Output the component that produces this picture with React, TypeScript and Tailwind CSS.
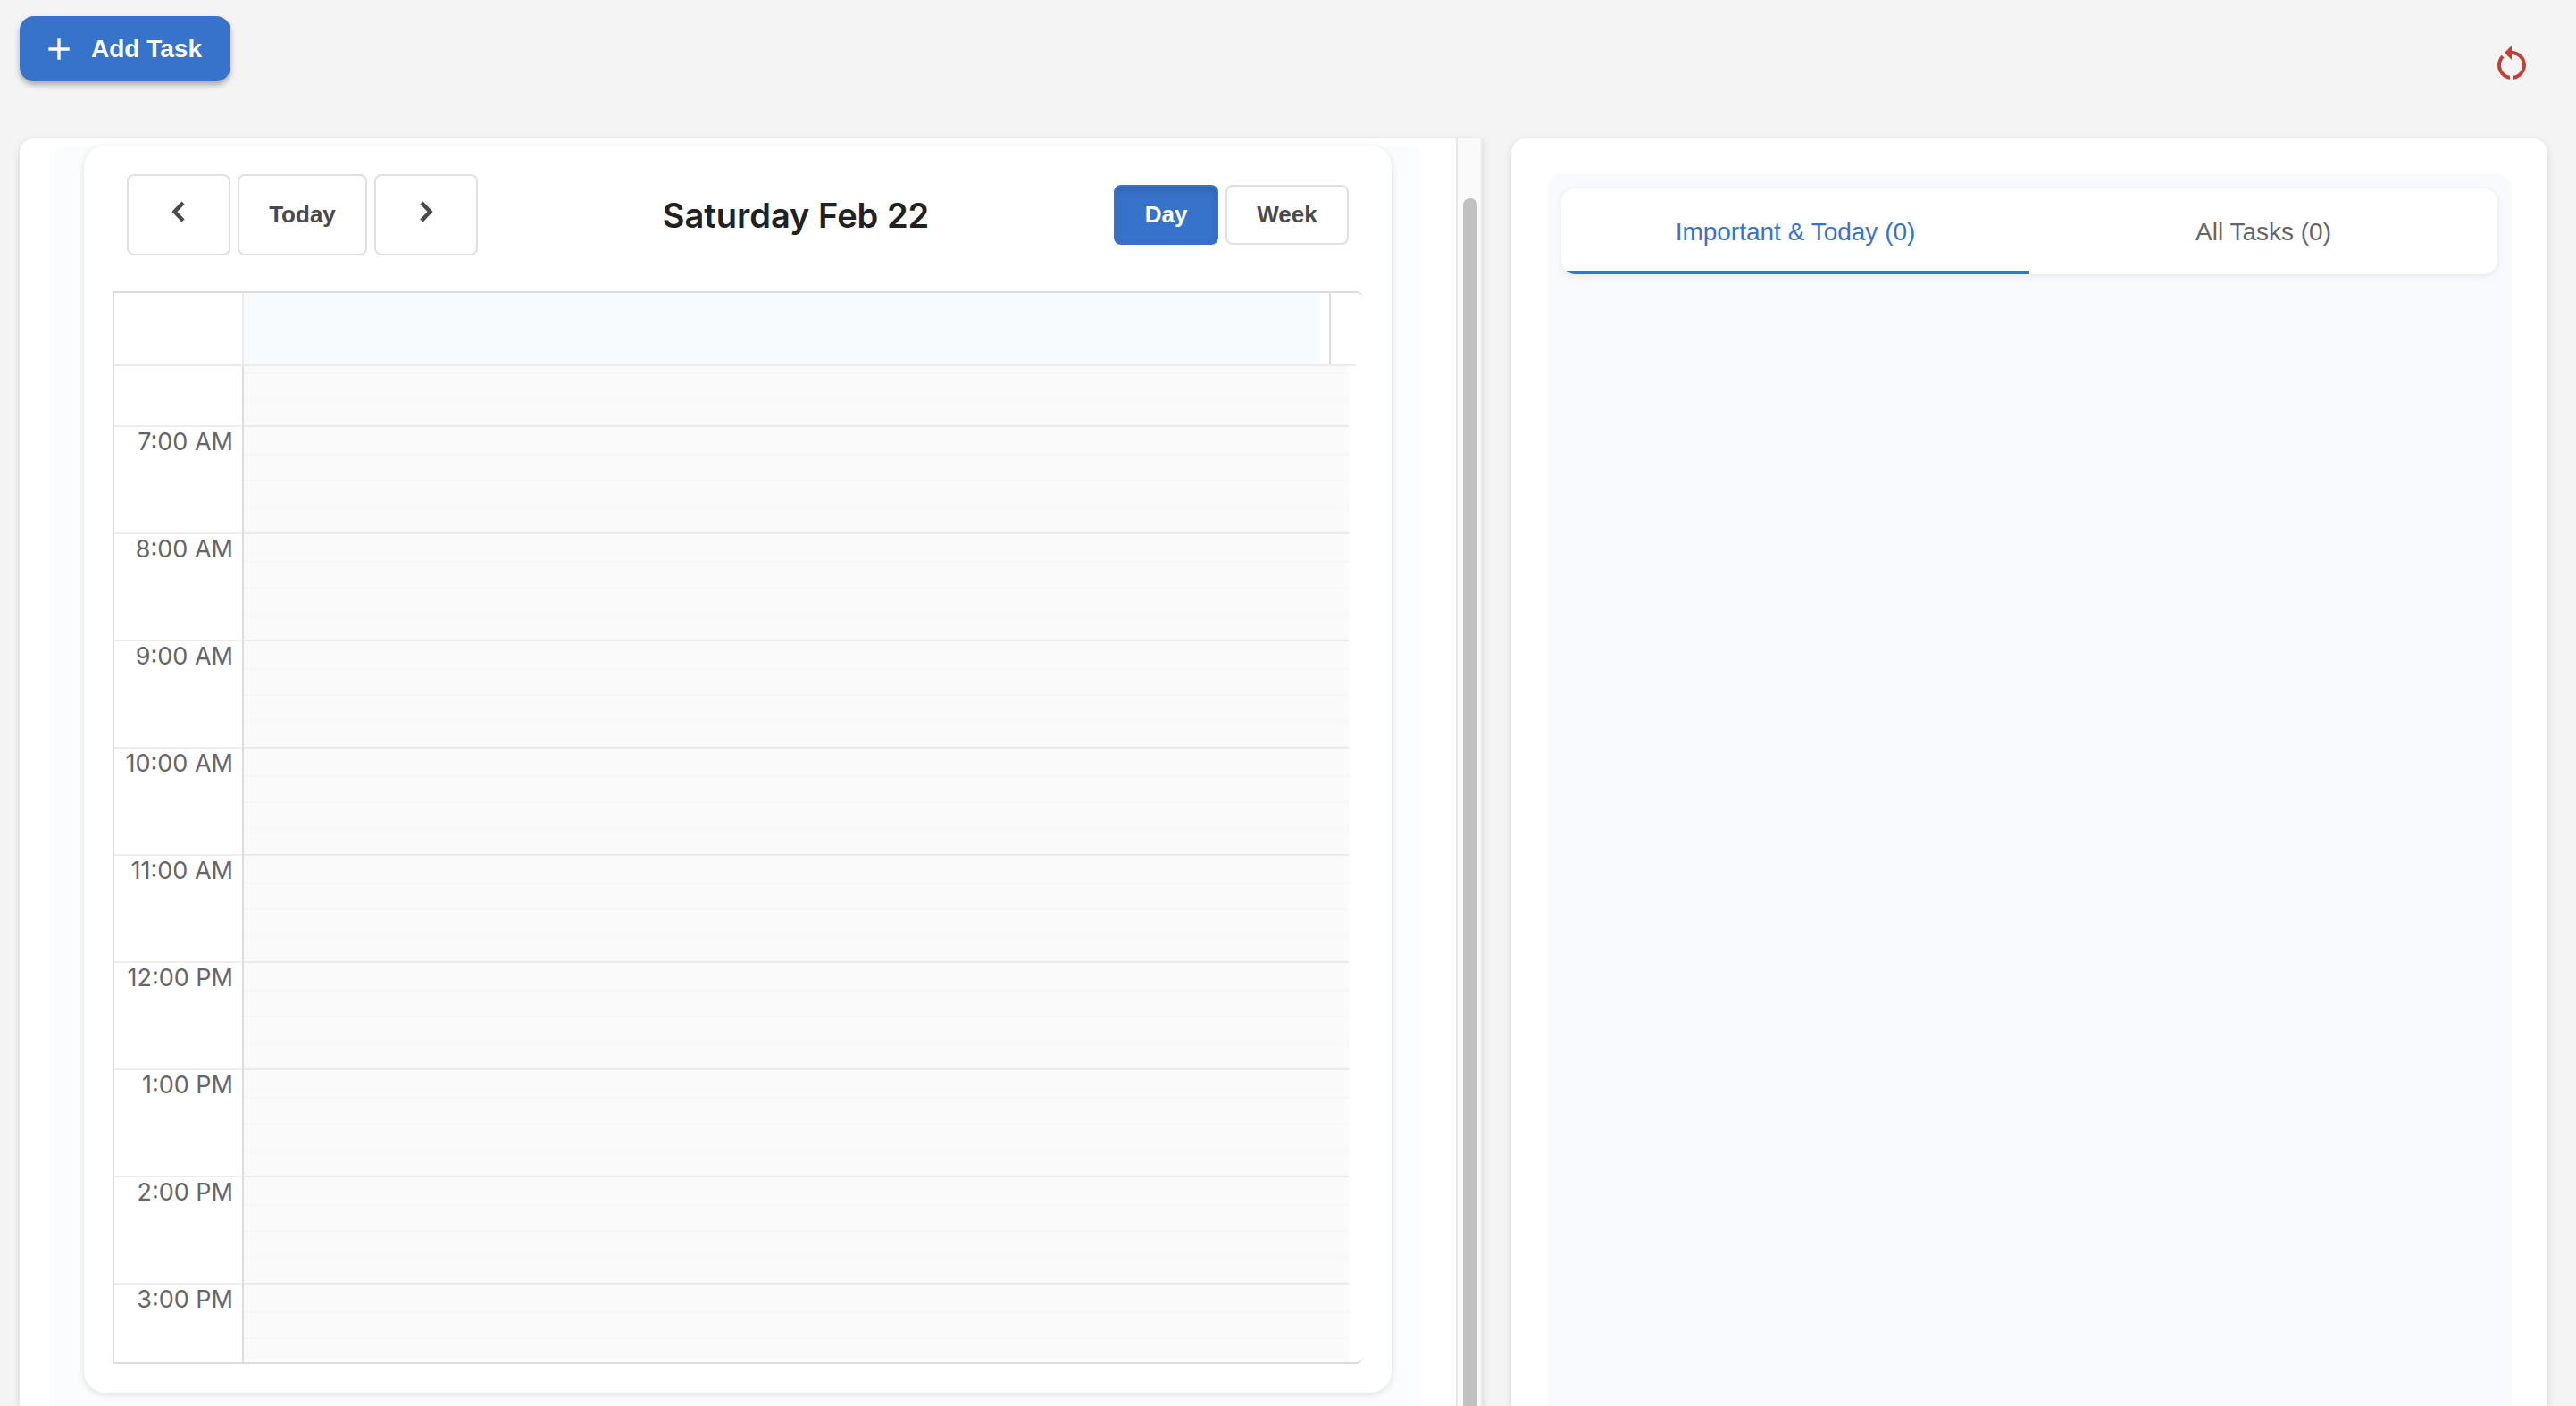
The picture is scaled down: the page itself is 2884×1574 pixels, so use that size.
import React, { useState } from "react";

type HourRow = { label: string; height: string; slots: string[] };

const FULL = ["h-[30px]", "h-[29px]", "h-[30px]", "h-[29px]"];

const rows: HourRow[] = [
  { label: "", height: "h-[66px]", slots: ["h-[7px]", "h-[30px]", "h-[29px]"] },
  { label: "7:00 AM", height: "h-[120px]", slots: FULL },
  { label: "8:00 AM", height: "h-[120px]", slots: FULL },
  { label: "9:00 AM", height: "h-[120px]", slots: FULL },
  { label: "10:00 AM", height: "h-[120px]", slots: FULL },
  { label: "11:00 AM", height: "h-[120px]", slots: FULL },
  { label: "12:00 PM", height: "h-[120px]", slots: FULL },
  { label: "1:00 PM", height: "h-[120px]", slots: FULL },
  { label: "2:00 PM", height: "h-[120px]", slots: FULL },
  { label: "3:00 PM", height: "h-[89px]", slots: ["h-[30px]", "h-[29px]", "h-[28px]"] },
];

const PANEL_SHADOW = "shadow-[0_2px_8px_rgba(0,0,0,0.12)]";

function Chevron({ flip = false }: { flip?: boolean }) {
  return (
    <svg
      viewBox="0 0 16 24"
      className={flip ? "h-6 w-4 -scale-x-100" : "h-6 w-4"}
      fill="none"
      stroke="currentColor"
      strokeWidth="4.5"
      strokeLinejoin="miter"
      aria-hidden="true"
    >
      <path d="M13 2 L3.5 12 L13 22" />
    </svg>
  );
}

function ToolbarButton({
  children,
  className = "",
  ...props
}: React.ButtonHTMLAttributes<HTMLButtonElement>) {
  return (
    <button
      type="button"
      className={`flex items-center justify-center rounded-lg border-2 text-[26px] font-bold ${className}`}
      {...props}
    >
      {children}
    </button>
  );
}

function Header() {
  return (
    <header className="mr-[10px] flex h-[93px] justify-between">
      <button
        type="button"
        className="flex h-[73px] items-center gap-4 self-start rounded-2xl bg-[#3873cb] pl-6 pr-8 text-[28px] font-bold text-white shadow-[0_4px_6px_rgba(0,0,0,0.3)]"
      >
        <svg viewBox="0 0 24 24" className="size-10" fill="currentColor" aria-hidden="true">
          <path d="M19 13h-6v6h-2v-6H5v-2h6V5h2v6h6z" />
        </svg>
        Add Task
      </button>
      <button type="button" aria-label="Reset" className="self-end p-4 text-[#c43e35]">
        <svg viewBox="0 0 24 24" className="size-12" fill="currentColor" aria-hidden="true">
          <path d="M12 5V2L8 6l4 4V7c3.31 0 6 2.69 6 6 0 2.97-2.17 5.43-5 5.91v2.02c3.95-.49 7-3.85 7-7.93 0-4.42-3.58-8-8-8m-6 8c0-1.65.67-3.15 1.76-4.24L6.34 7.34C4.9 8.79 4 10.79 4 13c0 4.08 3.05 7.44 7 7.93v-2.02c-2.83-.48-5-2.94-5-5.91" />
        </svg>
      </button>
    </header>
  );
}

function Calendar() {
  const [view, setView] = useState("Day");
  return (
    <section className="mt-2 rounded-3xl bg-white p-8 shadow-[0_2px_8px_rgba(0,0,0,0.12)]">
      <div className="mb-10 flex h-[91px] items-center justify-between px-4">
        <div className="flex gap-2 text-[#4a4a4a]">
          <ToolbarButton aria-label="Previous day" className="h-[91px] w-[116px] border-[#e0e0e0] pb-2">
            <Chevron />
          </ToolbarButton>
          <ToolbarButton className="w-[145px] border-[#e0e0e0]">Today</ToolbarButton>
          <ToolbarButton aria-label="Next day" className="h-[91px] w-[116px] border-[#e0e0e0] pb-2">
            <Chevron flip />
          </ToolbarButton>
        </div>
        <h2 className="font-['Inter'] text-[38px] leading-[48px] font-semibold text-[#212121]">
          Saturday Feb 22
        </h2>
        <div className="grid grid-cols-[117px_138px] gap-2">
          {["Day", "Week"].map((name) => (
            <ToolbarButton
              key={name}
              aria-pressed={view === name}
              onClick={() => setView(name)}
              className={
                view === name
                  ? "h-[67px] border-[#3873cb] bg-[#3873cb] text-white shadow-[inset_0_4px_8px_rgba(0,0,0,0.15)]"
                  : "h-[67px] border-[#e0e0e0] text-[#4a4a4a]"
              }
            >
              {name}
            </ToolbarButton>
          ))}
        </div>
      </div>

      <div className="rounded-r-lg border-y-2 border-l-2 border-[#ddd] font-['Inter'] text-[27px] leading-[34px] text-[#666]">
        <div className="mr-2 flex h-[82px] border-b-2 border-[#ebebeb]">
          <div className="w-[145px] border-r-2 border-[#ebebeb]" />
          <div className="mr-[10px] flex-1 bg-[#f7fbfe]" />
          <div className="w-[30px] border-l-2 border-[#ddd]" />
        </div>
        <div className="pr-4">
          <table className="w-full table-fixed border-separate border-spacing-0">
            <tbody>
              {rows.map((row, r) => (
                <tr key={r}>
                  <th
                    scope="row"
                    className="w-[145px] border-r-2 border-[#ddd] p-0 text-right align-top font-normal"
                  >
                    <div className={`${row.height} pr-[10px] ${r > 0 ? "border-t-2 border-[#eee]" : ""}`}>
                      {row.label}
                    </div>
                  </th>
                  <td className="bg-[#fafafa] p-0 align-top">
                    <div className={`${row.height} ${r > 0 ? "border-t-2 border-[#eaeaea]" : ""}`}>
                      {row.slots.map((h, i) => (
                        <div key={i} className={i > 0 ? `${h} border-t-2 border-[#f7f7f7]` : h} />
                      ))}
                    </div>
                  </td>
                </tr>
              ))}
            </tbody>
          </table>
        </div>
      </div>
    </section>
  );
}

function TaskPanel() {
  const [tab, setTab] = useState(0);
  return (
    <section className={`rounded-t-2xl bg-white px-10 pt-10 ${PANEL_SHADOW}`}>
      <div className="h-full rounded-t-2xl bg-[#f9fafe] p-4">
        <div
          role="tablist"
          className="grid h-24 grid-cols-2 overflow-hidden rounded-2xl bg-white shadow-[0_2px_8px_rgba(0,0,0,0.08)]"
        >
          {["Important & Today (0)", "All Tasks (0)"].map((label, i) => (
            <button
              key={label}
              type="button"
              role="tab"
              aria-selected={tab === i}
              onClick={() => setTab(i)}
              className={
                tab === i
                  ? "border-b-4 border-[#3873cb] pt-[6px] text-[28px] text-[#3873cb]"
                  : "border-b-4 border-transparent pt-[6px] text-[28px] text-[#666]"
              }
            >
              {label}
            </button>
          ))}
        </div>
      </div>
    </section>
  );
}

export default function App() {
  return (
    <div className="flex h-screen flex-col overflow-hidden bg-[#f4f4f4] pt-[18px] pr-[22px] pl-[22px] font-['Liberation_Sans',Arial,sans-serif]">
      <Header />
      <main className="mt-11 mr-[10px] grid min-h-0 flex-1 grid-cols-[1638fr_1160fr] gap-8">
        <section className={`flex rounded-tl-2xl bg-white ${PANEL_SHADOW}`}>
          <div className="flex-1 overflow-hidden rounded-tl-2xl px-10">
            <div className="h-full bg-[#fbfcfe] px-8">
              <Calendar />
            </div>
          </div>
          <div className="w-[30px] border-x-2 border-[#e8e8e8] bg-[#fafafa] px-[6px] pt-[67px]">
            <div className="h-full w-4 rounded-t-lg bg-[#c1c1c1]" />
          </div>
        </section>
        <TaskPanel />
      </main>
    </div>
  );
}
